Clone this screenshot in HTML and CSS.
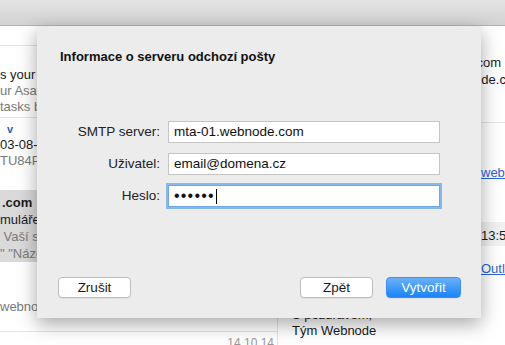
FILE: index.html
```html
<!DOCTYPE html>
<html lang="cs">
<head>
  <meta charset="UTF-8">
  <title>Informace o serveru odchozí pošty</title>
  <link rel="stylesheet" href="styles.css">
</head>
<body>

  <div class="toolbar"></div>

  <div class="main">
    <div class="list">
      <div class="item item-a"></div>
      <div class="item item-b">
        <div class="ln">s your calendar</div>
        <div class="ln dim">ur Asana tasks</div>
        <div class="ln dim">tasks by email</div>
      </div>
      <div class="item item-c">
        <div class="ln mark">v</div>
        <div class="ln">03-08-2014</div>
        <div class="ln dim">TU84PZ</div>
      </div>
      <div class="item item-d">
        <div class="ln bold">.com</div>
        <div class="ln">mulářem</div>
        <div class="ln dim">&nbsp;Vaší stránky</div>
        <div class="ln dim">" "Název</div>
      </div>
      <div class="item item-e">
        <div class="ln dim">webnode</div>
      </div>
      <div class="item item-f">
        <div class="date">14.10.14</div>
      </div>
    </div>

    <div class="pane">
      <div class="hdr">
        <div class="hl"><span class="end">info@webnode.com</span></div>
        <div class="hl"><span class="cut">webnode.cz</span></div>
      </div>
      <div class="body">
        <div class="bl link-row"><a class="link">webnode.cz</a></div>
        <div class="band"><span>13:54:08</span></div>
        <div class="bl"><a class="link">Outlook</a></div>
        <div class="sign">
          <div>S pozdravem,</div>
          <div>Tým Webnode</div>
        </div>
      </div>
    </div>
  </div>

  <div class="dialog">
    <div class="title">Informace o serveru odchozí pošty</div>

    <div class="form">
      <label>SMTP server:</label>
      <div class="field">mta-01.webnode.com</div>
      <label>Uživatel:</label>
      <div class="field">email@domena.cz</div>
      <label>Heslo:</label>
      <div class="field focus"><span class="dots">••••••</span><span class="caret"></span></div>
    </div>

    <div class="buttons">
      <button class="btn">Zrušit</button>
      <span class="spacer"></span>
      <button class="btn">Zpět</button>
      <button class="btn primary">Vytvořit</button>
    </div>
  </div>

</body>
</html>
```

FILE: styles.css
```css
body {
  margin: 0;
  width: 505px;
  height: 345px;
  overflow: hidden;
  font-family: "Liberation Sans", Arial, sans-serif;
  font-size: 13px;
  color: #1a1a1a;
  background: #fff;
}

.toolbar {
  height: 25px;
  background: linear-gradient(#e4e4e4, #d2d2d2);
  border-bottom: 1px solid #b4b4b4;
}

.main {
  display: flex;
  height: 319px;
}

/* lista zpráv */
.list {
  width: 277px;
  border-right: 1px solid #e2e2e2;
  white-space: nowrap;
  overflow: hidden;
}

.item {
  border-bottom: 1px solid #e4e4e4;
  line-height: 16px;
}

.item-a { height: 19px; }
.item-b { height: 48px; padding: 21px 0 2px; }
.item-c { height: 50px; padding: 3px 0 19px; border-bottom: none; }
.item-d { height: 68px; padding: 4px 0 0; line-height: 17px; background: #dadada; border-bottom: none; }
.item-e { height: 70px; padding-top: 37px; box-sizing: border-box; }
.item-f { height: 20px; padding-top: 4px; }

.ln.dim { color: #7a7a7a; }
.ln.bold { font-weight: bold; padding-left: 2px; }
.ln.mark { color: #2d5fa8; font-weight: bold; padding-left: 7px; font-size: 11px; }

.date {
  text-align: right;
  padding-right: 3px;
  color: #999;
  font-size: 12px;
  line-height: 14px;
}

/* náhled zprávy */
.pane {
  flex: 1;
  overflow: hidden;
  white-space: nowrap;
}

.hdr {
  padding-top: 28px;
  height: 68px;
  border-bottom: 1px solid #e4e4e4;
}

.hl { line-height: 17px; }

.hl .end {
  display: inline-block;
  width: 223px;
  text-align: right;
}

.hl .cut {
  display: inline-block;
  padding-left: 165px;
}

.body { padding-left: 14px; }

.bl { line-height: 16px; }

.link-row { margin-top: 42px; }

.link {
  color: #2a62d8;
  text-decoration: underline;
  display: inline-block;
  padding-left: 189px;
}

.band {
  margin: 41px 0 15px -14px;
  height: 24px;
  background: #f1f1f1;
  line-height: 28px;
}

.band span {
  padding-left: 203px;
}

.sign {
  margin-top: 30px;
  line-height: 16px;
}

/* dialog */
.dialog {
  position: absolute;
  left: 37px;
  top: 26px;
  width: 444px;
  height: 292px;
  background: #ececec;
  box-shadow: 0 6px 18px rgba(0, 0, 0, 0.35);
  display: flex;
  flex-direction: column;
}

.title {
  padding: 23px 23px 0;
  font-weight: bold;
  line-height: 16px;
  color: #111;
}

.form {
  margin-top: 56px;
  display: grid;
  grid-template-columns: 123px 272px;
  grid-auto-rows: 22px;
  column-gap: 8px;
  row-gap: 10px;
  font-size: 13.5px;
}

.form label {
  text-align: right;
  line-height: 22px;
  color: #222;
}

.field {
  box-sizing: border-box;
  background: #fff;
  border: 1px solid #c4c4c4;
  padding-left: 5px;
  line-height: 20px;
  color: #111;
  display: flex;
  align-items: center;
}

.field.focus {
  border-color: #6fa6e6;
  box-shadow: 0 0 0 2px #86b8ee;
}

.dots {
  font-size: 16px;
  letter-spacing: 1.2px;
  line-height: 20px;
}

.caret {
  width: 1px;
  height: 15px;
  background: #000;
  margin-left: 1px;
}

.buttons {
  margin-top: auto;
  padding: 0 20px 20px 21px;
  display: flex;
  gap: 13px;
}

.spacer { flex: 1; }

.btn {
  width: 73px;
  height: 21px;
  padding: 0;
  font-family: inherit;
  font-size: 13.5px;
  color: #1a1a1a;
  background: #fff;
  border: 1px solid #bdbdbd;
  border-radius: 4px;
  box-shadow: 0 1px 0 rgba(0, 0, 0, 0.05);
}

.btn.primary {
  width: 75px;
  color: #fff;
  border-color: #3d8ff4;
  background: linear-gradient(#6bb1fa, #1a83f7);
}
```
